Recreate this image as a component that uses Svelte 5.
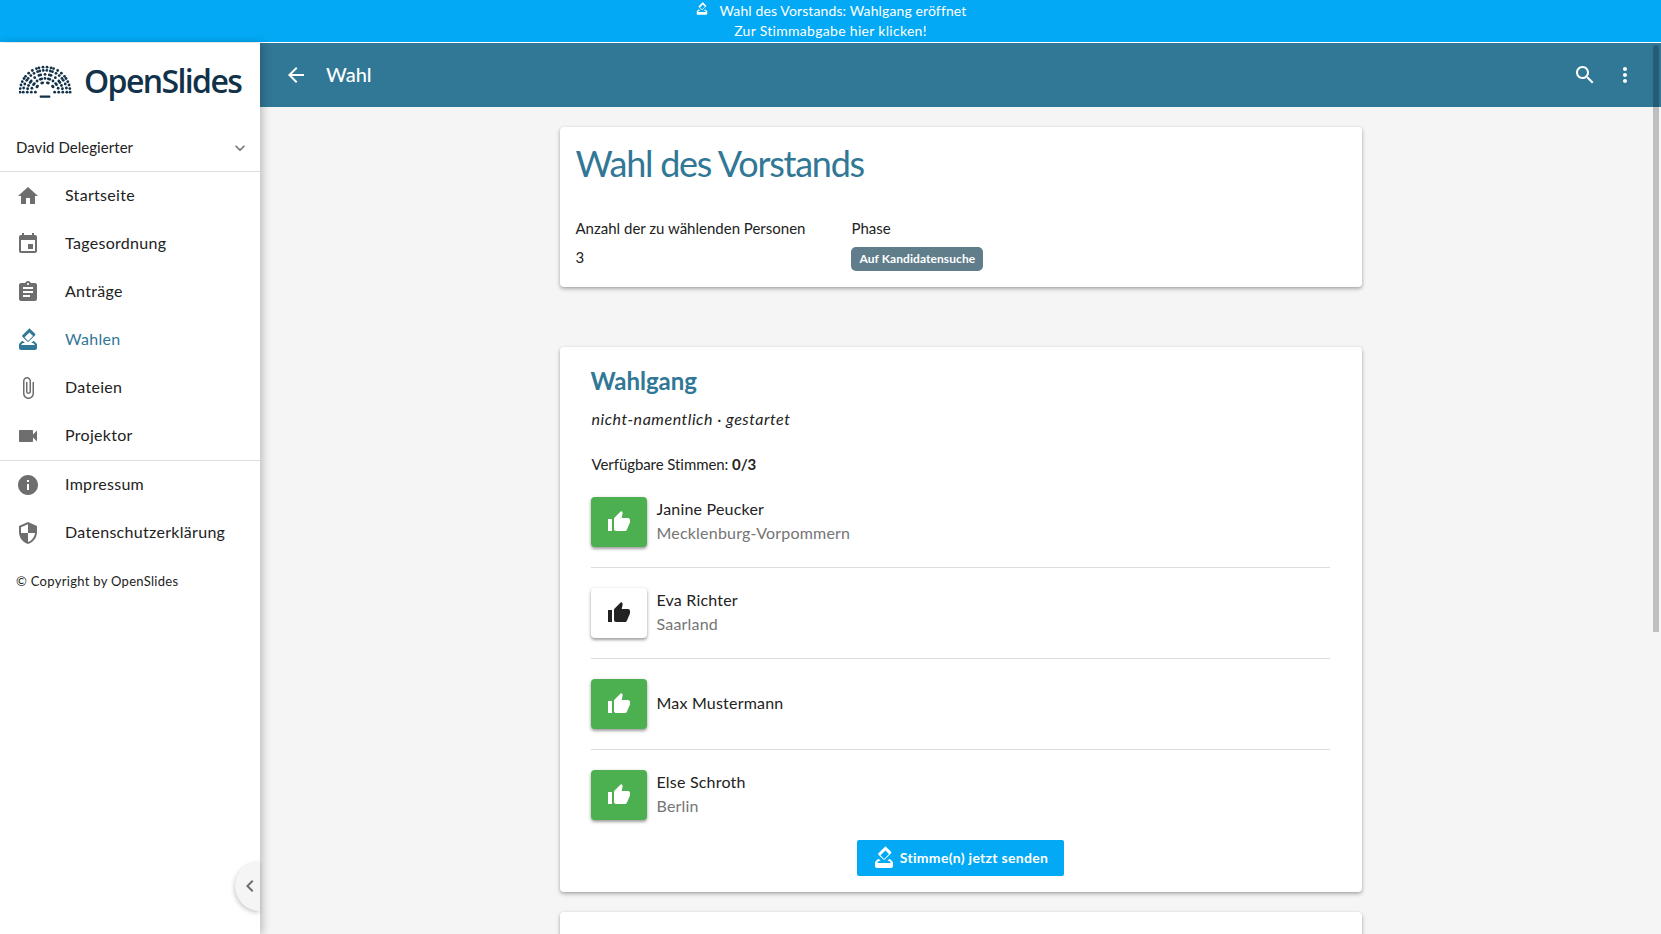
<script>
  const icons = {
    home: 'M10 20v-6h4v6h5v-8h3L12 3 2 12h3v8z',
    event: 'M17 12h-5v5h5v-5zM16 1v2H8V1H6v2H5c-1.11 0-1.99.9-1.99 2L3 19c0 1.1.89 2 2 2h14c1.1 0 2-.9 2-2V5c0-1.1-.9-2-2-2h-1V1h-2zm3 18H5V8h14v11z',
    assignment: 'M19 3h-4.18C14.4 1.84 13.3 1 12 1c-1.3 0-2.4.84-2.82 2H5c-1.1 0-2 .9-2 2v14c0 1.1.9 2 2 2h14c1.1 0 2-.9 2-2V5c0-1.1-.9-2-2-2zm-7 0c.55 0 1 .45 1 1s-.45 1-1 1-1-.45-1-1 .45-1 1-1zm2 14H7v-2h7v2zm3-4H7v-2h10v2zm0-4H7V7h10v2z',
    vote: 'M18 13h-.68l-2 2h1.91L19 17H5l1.78-2h2.05l-2-2H6l-3 3v4c0 1.1.89 2 1.99 2H19c1.1 0 2-.89 2-2v-4l-3-3zm-1-5.05l-4.95 4.95-3.54-3.54 4.95-4.95L17 7.95zm-4.24-7.07L6.39 7.25c-.39.39-.39 1.02 0 1.41l4.95 4.95c.39.39 1.02.39 1.41 0l6.36-6.36c.39-.39.39-1.02 0-1.41L14.16.88c-.38-.39-1.01-.39-1.4 0z',
    attach: 'M16.5 6v11.5c0 2.21-1.79 4-4 4s-4-1.79-4-4V5c0-1.38 1.12-2.5 2.5-2.5s2.5 1.12 2.5 2.5v10.5c0 .55-.45 1-1 1s-1-.45-1-1V6H10v9.5c0 1.38 1.12 2.5 2.5 2.5s2.5-1.12 2.5-2.5V5c0-2.21-1.79-4-4-4S7 2.79 7 5v12.5c0 3.04 2.46 5.5 5.5 5.5s5.5-2.46 5.5-5.5V6h-1.5z',
    videocam: 'M17 10.5V7c0-.55-.45-1-1-1H4c-.55 0-1 .45-1 1v10c0 .55.45 1 1 1h12c.55 0 1-.45 1-1v-3.5l4 4v-11l-4 4z',
    info: 'M12 2C6.48 2 2 6.48 2 12s4.48 10 10 10 10-4.48 10-10S17.52 2 12 2zm1 15h-2v-6h2v6zm0-8h-2V7h2v2z',
    security: 'M12 1L3 5v6c0 5.55 3.84 10.74 9 12 5.16-1.26 9-6.45 9-12V5l-9-4zm0 10.99h7c-.53 4.12-3.28 7.79-7 8.94V12H5V6.3l7-3.11v8.8z',
    thumb: 'M1 21h4V9H1v12zm22-11c0-1.1-.9-2-2-2h-6.31l.95-4.57.03-.32c0-.41-.17-.79-.44-1.06L14.17 1 7.59 7.59C7.22 7.95 7 8.45 7 9v10c0 1.1.9 2 2 2h9c.83 0 1.54-.5 1.84-1.22l3.02-7.05c.09-.23.14-.47.14-.73v-2z',
    search: 'M15.5 14h-.79l-.28-.27C15.41 12.59 16 11.11 16 9.5 16 5.91 13.09 3 9.5 3S3 5.91 3 9.5 5.91 16 9.5 16c1.61 0 3.09-.59 4.23-1.57l.27.28v.79l5 4.99L20.49 19l-4.99-5zm-6 0C7.01 14 5 11.99 5 9.5S7.01 5 9.5 5 14 7.01 14 9.5 11.99 14 9.5 14z',
    more: 'M12 8c1.1 0 2-.9 2-2s-.9-2-2-2-2 .9-2 2 .9 2 2 2zm0 2c-1.1 0-2 .9-2 2s.9 2 2 2 2-.9 2-2-.9-2-2-2zm0 6c-1.1 0-2 .9-2 2s.9 2 2 2 2-.9 2-2-.9-2-2-2z',
    back: 'M20 11H7.83l5.59-5.59L12 4l-8 8 8 8 1.41-1.41L7.83 13H20v-2z',
    expand: 'M16.59 8.59L12 13.17 7.41 8.59 6 10l6 6 6-6z',
    left: 'M15.41 7.41L14 6l-6 6 6 6 1.41-1.41L10.83 12z'
  };

  const mainNav = [
    { label: 'Startseite', icon: icons.home },
    { label: 'Tagesordnung', icon: icons.event },
    { label: 'Anträge', icon: icons.assignment },
    { label: 'Wahlen', icon: icons.vote, active: true },
    { label: 'Dateien', icon: icons.attach },
    { label: 'Projektor', icon: icons.videocam }
  ];
  const metaNav = [
    { label: 'Impressum', icon: icons.info },
    { label: 'Datenschutzerklärung', icon: icons.security }
  ];

  const candidates = [
    { name: 'Janine Peucker', group: 'Mecklenburg-Vorpommern', voted: true },
    { name: 'Eva Richter', group: 'Saarland', voted: false },
    { name: 'Max Mustermann', group: '', voted: true },
    { name: 'Else Schroth', group: 'Berlin', voted: true }
  ];

  // logo: semicircle of seats, split into wedges
  const seats = [];
  const radii = [10, 14.2, 18.4, 22.6, 26];
  const sectors = [[0, 33], [39, 70], [76, 104], [110, 141], [147, 180]];
  radii.forEach((r) => {
    sectors.forEach(([from, to]) => {
      const span = ((to - from) * Math.PI) / 180;
      const n = Math.max(1, Math.round((r * span) / 4.1));
      for (let k = 0; k <= n; k++) {
        const a = ((from + ((to - from) * k) / n) * Math.PI) / 180;
        seats.push({ x: 27 + r * Math.cos(a), y: 28 - r * Math.sin(a) });
      }
    });
  });
</script>

<div class="app">
  <div class="banner">
    <div class="banner-line">
      <svg class="banner-icon" viewBox="0 0 24 24"><path d={icons.vote} /></svg>
      <span>Wahl des Vorstands: Wahlgang eröffnet</span>
    </div>
    <div>Zur Stimmabgabe hier klicken!</div>
  </div>

  <div class="shell">
    <aside class="sidebar">
      <div class="logo">
        <svg class="seats" viewBox="0 0 55 36">
          {#each seats as s}
            <circle cx={s.x} cy={s.y} r="1.45" />
          {/each}
          <rect x="21.5" y="31.5" width="11" height="2.2" rx="0.6" />
        </svg>
        <span class="logo-text">OpenSlides</span>
      </div>

      <div class="user">
        <span>David Delegierter</span>
        <svg class="chevron" viewBox="0 0 24 24"><path d={icons.expand} /></svg>
      </div>

      <nav class="nav first">
        {#each mainNav as item}
          <div class="nav-item" class:active={item.active}>
            <svg viewBox="0 0 24 24"><path d={item.icon} /></svg>
            <span>{item.label}</span>
          </div>
        {/each}
      </nav>
      <nav class="nav">
        {#each metaNav as item}
          <div class="nav-item">
            <svg viewBox="0 0 24 24"><path d={item.icon} /></svg>
            <span>{item.label}</span>
          </div>
        {/each}
      </nav>

      <p class="copyright">© Copyright by OpenSlides</p>

      <div class="collapse">
        <svg viewBox="0 0 24 24"><path d={icons.left} /></svg>
      </div>
    </aside>

    <main class="main">
      <header class="toolbar">
        <svg class="tool-icon" viewBox="0 0 24 24"><path d={icons.back} /></svg>
        <h1 class="toolbar-title">Wahl</h1>
        <svg class="tool-icon search" viewBox="0 0 24 24"><path d={icons.search} /></svg>
        <svg class="tool-icon" viewBox="0 0 24 24"><path d={icons.more} /></svg>
      </header>

      <div class="content">
        <section class="card head-card">
          <h2 class="page-title">Wahl des Vorstands</h2>
          <div class="facts">
            <div>
              <div class="fact-label">Anzahl der zu wählenden Personen</div>
              <div class="fact-value">3</div>
            </div>
            <div>
              <div class="fact-label">Phase</div>
              <span class="chip">Auf Kandidatensuche</span>
            </div>
          </div>
        </section>

        <section class="card poll-card">
          <h3 class="poll-title">Wahlgang</h3>
          <p class="poll-meta">nicht-namentlich · gestartet</p>
          <p class="poll-votes">Verfügbare Stimmen: <b>0/3</b></p>

          <div class="rows">
            {#each candidates as c}
              <div class="row">
                <button class="vote-btn" class:voted={c.voted}>
                  <svg viewBox="0 0 24 24"><path d={icons.thumb} /></svg>
                </button>
                <div class="who">
                  <div class="who-name">{c.name}</div>
                  {#if c.group}
                    <div class="who-group">{c.group}</div>
                  {/if}
                </div>
              </div>
            {/each}
          </div>

          <div class="submit-wrap">
            <button class="submit">
              <svg viewBox="0 0 24 24"><path d={icons.vote} /></svg>
              <span>Stimme(n) jetzt senden</span>
            </button>
          </div>
        </section>

        <section class="card next-card"></section>
      </div>

      <div class="scroll-thumb"></div>
    </main>
  </div>
</div>

<style>
  :global(body) {
    margin: 0;
    overflow: hidden;
  }

  .app {
    height: 934px;
    display: flex;
    flex-direction: column;
    font-family: 'Lato', 'Open Sans', sans-serif;
    color: #222;
    font-size: 16px;
  }

  svg {
    fill: currentColor;
    display: block;
    flex: none;
  }

  .banner {
    height: 42px;
    flex: none;
    background-color: #03a9f4;
    color: #fff;
    text-align: center;
    font-size: 14px;
    line-height: 20px;
    border-bottom: 1px solid #fff;
    letter-spacing: 0.3px;
  }

  .banner-line {
    display: flex;
    justify-content: center;
    align-items: flex-start;
    gap: 11px;
    height: 21px;
    padding-top: 1px;
    box-sizing: border-box;
    letter-spacing: 0.12px;
  }

  .banner-icon {
    width: 14px;
    height: 14px;
    margin-top: 1px;
  }

  .shell {
    flex: 1;
    display: flex;
    min-height: 0;
  }

  .sidebar {
    position: relative;
    z-index: 2;
    width: 260px;
    flex: none;
    background-color: #fff;
    box-shadow: 3px 0 8px rgba(0, 0, 0, 0.22);
  }

  .logo {
    height: 75px;
    display: flex;
    align-items: center;
    padding-left: 19px;
    gap: 12px;
  }

  .seats {
    width: 53px;
    height: 35px;
    color: #12324a;
    margin-top: 3px;
  }

  .logo-text {
    font-family: 'Open Sans', sans-serif;
    font-size: 32px;
    font-weight: 600;
    letter-spacing: -1.6px;
    color: #12324a;
  }

  .user {
    height: 54px;
    box-sizing: border-box;
    display: flex;
    align-items: center;
    justify-content: space-between;
    padding: 4px 10px 0 16px;
    font-size: 15px;
    letter-spacing: 0.05px;
    border-bottom: 1px solid #ddd;
  }

  .chevron {
    width: 20px;
    height: 20px;
    color: #757575;
    margin-top: 3px;
  }

  .nav.first {
    border-bottom: 1px solid #ddd;
  }

  .nav-item {
    height: 48px;
    display: flex;
    align-items: center;
    padding-left: 16px;
    gap: 25px;
    letter-spacing: 0.3px;
  }

  .nav-item span {
    padding-bottom: 3px;
  }

  .nav-item svg {
    width: 24px;
    height: 24px;
    color: #6e6e6e;
  }

  .nav-item.active,
  .nav-item.active svg {
    color: #317796;
  }

  .copyright {
    margin: 16px 0 0 16px;
    font-size: 13px;
    letter-spacing: 0.3px;
  }

  .collapse {
    position: absolute;
    left: 235px;
    bottom: 23px;
    width: 25px;
    height: 50px;
    border-radius: 25px 0 0 25px;
    background-color: #f5f5f5;
    box-shadow: -1px 2px 4px rgba(0, 0, 0, 0.2);
    display: flex;
    align-items: center;
    color: #6e6e6e;
  }

  .collapse svg {
    width: 24px;
    height: 24px;
    margin-left: 3px;
  }

  .main {
    position: relative;
    flex: 1;
    min-width: 0;
    background-color: #f5f5f5;
    overflow: hidden;
  }

  .toolbar {
    height: 64px;
    background-color: #317796;
    color: #fff;
    display: flex;
    align-items: center;
    padding: 0 24px;
  }

  .tool-icon {
    width: 24px;
    height: 24px;
  }

  .tool-icon.search {
    margin-right: 16px;
  }

  .toolbar-title {
    flex: 1;
    margin: 0 0 2px 18px;
    font-size: 20px;
    font-weight: 500;
    letter-spacing: 0;
  }

  .content {
    width: 802px;
    margin: 20px auto 0;
    display: flex;
    flex-direction: column;
  }

  .card {
    background-color: #fff;
    border-radius: 4px;
    box-shadow: 0 2px 4px rgba(0, 0, 0, 0.25), 0 1px 3px rgba(0, 0, 0, 0.12);
  }

  .head-card {
    height: 160px;
    box-sizing: border-box;
    padding: 15px 15px 15px 16px;
    margin-bottom: 60px;
  }

  .page-title {
    margin: 0;
    font-size: 36px;
    font-weight: 400;
    line-height: 42px;
    letter-spacing: -1.25px;
    color: #317796;
  }

  .facts {
    display: flex;
    gap: 46px;
    margin-top: 31px;
    font-size: 15px;
    letter-spacing: 0;
  }

  .fact-label {
    line-height: 26px;
  }

  .fact-value {
    line-height: 26px;
    margin-top: 3px;
  }

  .chip {
    display: inline-block;
    margin-top: 6px;
    height: 24px;
    line-height: 24px;
    padding: 0 8px;
    border-radius: 5px;
    background-color: #607d8b;
    color: #fff;
    font-size: 12px;
    font-weight: 700;
    letter-spacing: 0.08px;
  }

  .poll-card {
    height: 545px;
    box-sizing: border-box;
    padding: 17px 32px 0 31px;
    margin-bottom: 20px;
  }

  .poll-title {
    margin: 0;
    font-size: 24px;
    font-weight: 700;
    line-height: 34px;
    color: #317796;
  }

  .poll-meta {
    margin: 10px 0 0;
    padding-left: 1px;
    font-size: 16px;
    font-style: italic;
    line-height: 22px;
    letter-spacing: 0.53px;
  }

  .poll-votes {
    margin: 23px 0 0;
    padding-left: 1px;
    font-size: 15px;
    line-height: 22px;
    letter-spacing: -0.07px;
  }

  .rows {
    margin-top: 22px;
  }

  .row {
    height: 91px;
    box-sizing: border-box;
    display: flex;
    align-items: flex-start;
    gap: 10px;
    border-bottom: 1px solid #ddd;
  }

  .row:not(:first-child) {
    padding-top: 20px;
  }

  .row:first-child {
    height: 71px;
  }

  .row:last-child {
    border-bottom: none;
    height: 81px;
  }

  .vote-btn {
    width: 56px;
    height: 50px;
    border: none;
    border-radius: 4px;
    background-color: #fff;
    color: #222;
    display: flex;
    align-items: center;
    justify-content: center;
    padding: 0;
    box-shadow: 0 2px 3px rgba(0, 0, 0, 0.3), 0 1px 4px rgba(0, 0, 0, 0.14);
  }

  .vote-btn svg {
    width: 24px;
    height: 24px;
  }

  .vote-btn.voted {
    background-color: #4caf50;
    color: #fff;
  }

  .who {
    min-height: 48px;
    display: flex;
    flex-direction: column;
    justify-content: center;
    letter-spacing: 0.2px;
  }

  .who-name {
    line-height: 24px;
  }

  .who-group {
    line-height: 24px;
    color: #757575;
  }

  .submit-wrap {
    display: flex;
    justify-content: center;
    margin-top: 9px;
  }

  .submit {
    width: 207px;
    height: 36px;
    border: none;
    border-radius: 2px;
    background-color: #03a9f4;
    color: #fff;
    font-family: inherit;
    font-size: 14px;
    font-weight: 700;
    letter-spacing: 0.3px;
    display: flex;
    align-items: center;
    justify-content: center;
    gap: 4px;
    padding: 0;
  }

  .submit svg {
    width: 24px;
    height: 24px;
  }

  .submit span {
    padding-bottom: 2px;
  }

  .next-card {
    height: 60px;
  }

  .scroll-thumb {
    position: absolute;
    top: 2px;
    right: 2px;
    width: 6px;
    height: 587px;
    border-radius: 3px 3px 0 0;
    background-color: rgba(0, 0, 0, 0.22);
  }
</style>
